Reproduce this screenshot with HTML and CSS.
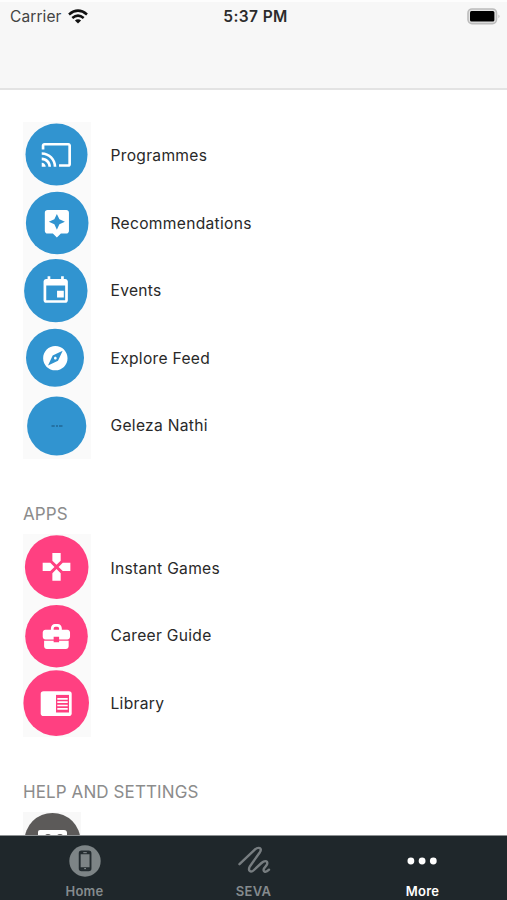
FILE: index.html
```html
<!DOCTYPE html>
<html lang="en">
<head>
<meta charset="utf-8">
<title>More</title>
<link rel="stylesheet" href="styles.css">
</head>
<body>
<div class="app">
  <header class="topbar">
    <div class="status">
      <div class="carrier"><span>Carrier</span>
        <svg class="wifi" viewBox="0 0 20 15"><g fill="none" stroke="#111" stroke-width="2.6"><path d="M1 5.4Q10-2 19 5.4"/><path d="M4.3 9Q10 4.300 15.700 9"/></g><path fill="#111" d="M6.900 11.400Q10 9 13.100 11.400L10 14.600Z"/></svg>
      </div>
      <div class="time">5:37 PM</div>
      <svg class="battery" viewBox="0 0 34 17"><rect x="1" y="1" width="28.500" height="14.600" rx="4" fill="#e4e4e4" stroke="#bcbcbc" stroke-width="1.600"/><rect x="3" y="3" width="24.400" height="10.600" rx="1.500" fill="#000"/><path d="M31.500 6.500q2 1.800 0 3.800z" fill="#b5b5b5"/></svg>
    </div>
  </header>
  <main class="content">
    <ul class="list blue">
      <li class="row"><svg class="tile" viewBox="0 0 67.5 67.5"><circle cx="33.500" cy="32.600" r="31"/><path class="glyph" transform="translate(17.4 16.900) scale(1.33)" d="M21 3H3c-1.100 0-2 .9-2 2v3h2V5h18v14h-7v2h7c1.100 0 2-.9 2-2V5c0-1.100-.9-2-2-2zM1 18v3h3c0-1.660-1.340-3-3-3zm0-4v2c2.760 0 5 2.240 5 5h2c0-3.870-3.130-7-7-7zm0-4v2c4.970 0 9 4.030 9 9h2c0-6.080-4.930-11-11-11z"/></svg><span>Programmes</span></li>
      <li class="row"><svg class="tile" viewBox="0 0 67.5 67.5"><circle cx="34.200" cy="34" r="31.300"/><path class="glyph" transform="translate(17.800 18.400) scale(1.34 1.31)" d="M19 2H5c-1.110 0-2 .9-2 2v14c0 1.100.89 2 2 2h4l3 3 3-3h4c1.100 0 2-.9 2-2V4c0-1.100-.9-2-2-2zm-5.120 10.880L12 17l-1.880-4.120L6 11l4.120-1.880L12 5l1.880 4.120L18 11l-4.120 1.880z"/></svg><span>Recommendations</span></li>
      <li class="row"><svg class="tile" viewBox="0 0 67.5 67.5"><circle cx="32.800" cy="33.650" r="31.700"/><path class="glyph" transform="translate(16.500 17.900) scale(1.35 1.33)" d="M18 12h-5v5h5v-5zM16 1v2H8V1H6v2H5c-1.110 0-1.990.9-1.990 2L3 19c0 1.100.89 2 2 2h14c1.100 0 2-.9 2-2V5c0-1.100-.9-2-2-2h-1V1h-2zm3 18H5V8h14v11z"/></svg><span>Events</span></li>
      <li class="row"><svg class="tile" viewBox="0 0 67.5 67.5"><circle cx="32" cy="33.750" r="29"/><path class="glyph" transform="translate(17.700 19.500) scale(1.22)" d="M12 10.900c-.61 0-1.100.49-1.100 1.100s.49 1.100 1.100 1.100c.61 0 1.100-.49 1.100-1.100s-.49-1.100-1.100-1.100zM12 2C6.480 2 2 6.480 2 12s4.480 10 10 10 10-4.480 10-10S17.520 2 12 2zm2.190 12.190L6 18l3.810-8.190L18 6l-3.810 8.190z"/></svg><span>Explore Feed</span></li>
      <li class="row"><svg class="tile" viewBox="0 0 67.5 67.5"><circle cx="33.700" cy="34" r="29.600"/><path d="M28.500 34h3.200M33 34h2M36 34h3.500" stroke="#216795" stroke-width="1.600"/></svg><span>Geleza Nathi</span></li>
    </ul>
    <h2 class="heading">APPS</h2>
    <ul class="list pink">
      <li class="row"><svg class="tile" viewBox="0 0 67.5 67.5"><circle cx="33.700" cy="33.100" r="31.800"/><path class="glyph" transform="translate(16.900 16.300) scale(1.385)" d="M15 7.500V2H9v5.500l3 3 3-3zM7.500 9H2v6h5.500l3-3-3-3zM9 16.500V22h6v-5.500l-3-3-3 3zM16.500 9l-3 3 3 3H22V9h-5.500z"/></svg><span>Instant Games</span></li>
      <li class="row"><svg class="tile" viewBox="0 0 67.5 67.5"><circle cx="33.500" cy="34.200" r="31.300"/><path class="glyph" transform="translate(17 18.300) scale(1.365)" d="M10 16v-1H3.010L3 19c0 1.110.89 2 2 2h14c1.110 0 2-.89 2-2v-4h-7v1h-4zm10-9h-4.010V6c0-2-1.300-3.300-3-3.300h-2c-1.700 0-3 1.300-3 3.300v1H4c-1.100 0-2 .9-2 2v3c0 1.110.89 2 2 2h6v-2h4v2h6c1.100 0 2-.9 2-2V9c0-1.100-.9-2-2-2zm-6 0h-4V6q0-1.300 1.300-1.300h1.400Q14 4.700 14 6v1z"/></svg><span>Career Guide</span></li>
      <li class="row"><svg class="tile" viewBox="0 0 67.5 67.5"><circle cx="33.200" cy="34.100" r="32.800"/><rect class="glyph" x="17.700" y="22.300" width="31" height="24.800" rx="2.800"/><path d="M33 25.900h13v17.600H33z"/><path d="M34.300 29.900h10.400M34.300 33.200h10.400M34.300 36.500h10.400M34.300 39.800h10.400" stroke="#fff" stroke-width="1.700"/></svg><span>Library</span></li>
    </ul>
    <h2 class="heading">HELP AND SETTINGS</h2>
    <ul class="list gray">
      <li class="row"><svg class="tile help" viewBox="0 0 58 67.5"><circle cx="29.500" cy="28.900" r="28"/><path class="glyph" d="M17 18h24q3 0 3 3v16H15V20q0-2 2-2z"/><circle cx="25" cy="25.500" r="3.500"/><circle cx="37" cy="25.500" r="3.500"/></svg></li>
    </ul>
  </main>
  <nav class="tabs">
    <a class="tab"><svg viewBox="0 0 34 34"><circle cx="17" cy="17" r="15.700" fill="#7d8486"/><rect x="11.700" y="7.500" width="10.800" height="18.800" rx="1.800" fill="#7d8486" stroke="#242c30" stroke-width="1.900"/><path d="M11.500 9h11.200M11.500 24.500h11.200" stroke="#242c30" stroke-width="2.600"/><path d="M15.300 8.700h3.500M16.200 24.600h1.800" stroke="#8c9294" stroke-width="1"/></svg><span>Home</span></a>
    <a class="tab"><svg viewBox="0 0 34 34"><path d="M2.500 20.200L17.800 5.600C21.500 2.400 25.700 4 22.900 8.200L13 22.200C10.500 26.500 13.500 29.300 17 26L24.500 19C28.400 15.500 32 17.400 29.500 21.300L27.200 24.200C25.200 27.600 28.500 29.300 32 25.700" fill="none" stroke="#777d80" stroke-width="2.400" stroke-linecap="round" stroke-linejoin="round"/></svg><span>SEVA</span></a>
    <a class="tab active"><svg viewBox="0 0 34 34"><g fill="#fff"><circle cx="4.900" cy="17" r="3.400"/><circle cx="16.100" cy="17" r="3.400"/><circle cx="27.300" cy="17" r="3.400"/></g></svg><span>More</span></a>
  </nav>
</div>
</body>
</html>
```
FILE: styles.css
```css
* { box-sizing: border-box; }
body { margin: 0; background: #fff; font-family: Inter, "Liberation Sans", sans-serif; color: #292929; }
.app { height: 900px; display: flex; flex-direction: column; overflow: hidden; }
.topbar { height: 90px; flex: none; background: #f7f7f7; border-top: 2px solid #fdfdfd; border-bottom: 2px solid #e3e3e3; }
.status { display: grid; grid-template-columns: 1fr auto 1fr; align-items: center; height: 28px; padding: 0 6px 0 10px; }
.carrier { display: flex; align-items: center; gap: 6px; font-size: 15.5px; color: #444; letter-spacing: .1px; }
.wifi { width: 20px; height: 15px; }
.time { font-size: 15.5px; font-weight: 600; color: #2c2c2c; letter-spacing: .4px; }
.battery { width: 34px; height: 17px; justify-self: end; }
.content { flex: 1; min-height: 0; overflow: hidden; padding: 31.75px 23px 0; }
.list { list-style: none; margin: 0; padding: 0; }
.row { display: flex; align-items: center; gap: 20px; height: 67.5px; font-size: 15.6px; letter-spacing: .3px; }
.tile { width: 67.5px; height: 67.5px; flex: none; background: #fafafa; }
.tile.help { width: 58px; background: #f8f8f8; }
.blue .tile { fill: #3194d0; }
.pink .tile { fill: #ff4081; }
.gray .tile { fill: #5c5a59; }
.tile .glyph { fill: #fff; }
.heading { margin: 0; height: 75px; padding-top: 35px; font-size: 17px; line-height: 41px; font-weight: 400; color: #8c8c8c; letter-spacing: .1px; }
.tabs { flex: none; height: 65px; display: grid; grid-template-columns: repeat(3, 1fr); background: #1f272b; border-top: 1px solid #8d9193; }
.tab { display: flex; flex-direction: column; align-items: center; padding-top: 8px; font-size: 13px; line-height: 16px; font-weight: 600; color: #858b8e; letter-spacing: .3px; }
.tab svg { width: 34px; height: 34px; margin-bottom: 5px; }
.active { color: #fff; }
```
